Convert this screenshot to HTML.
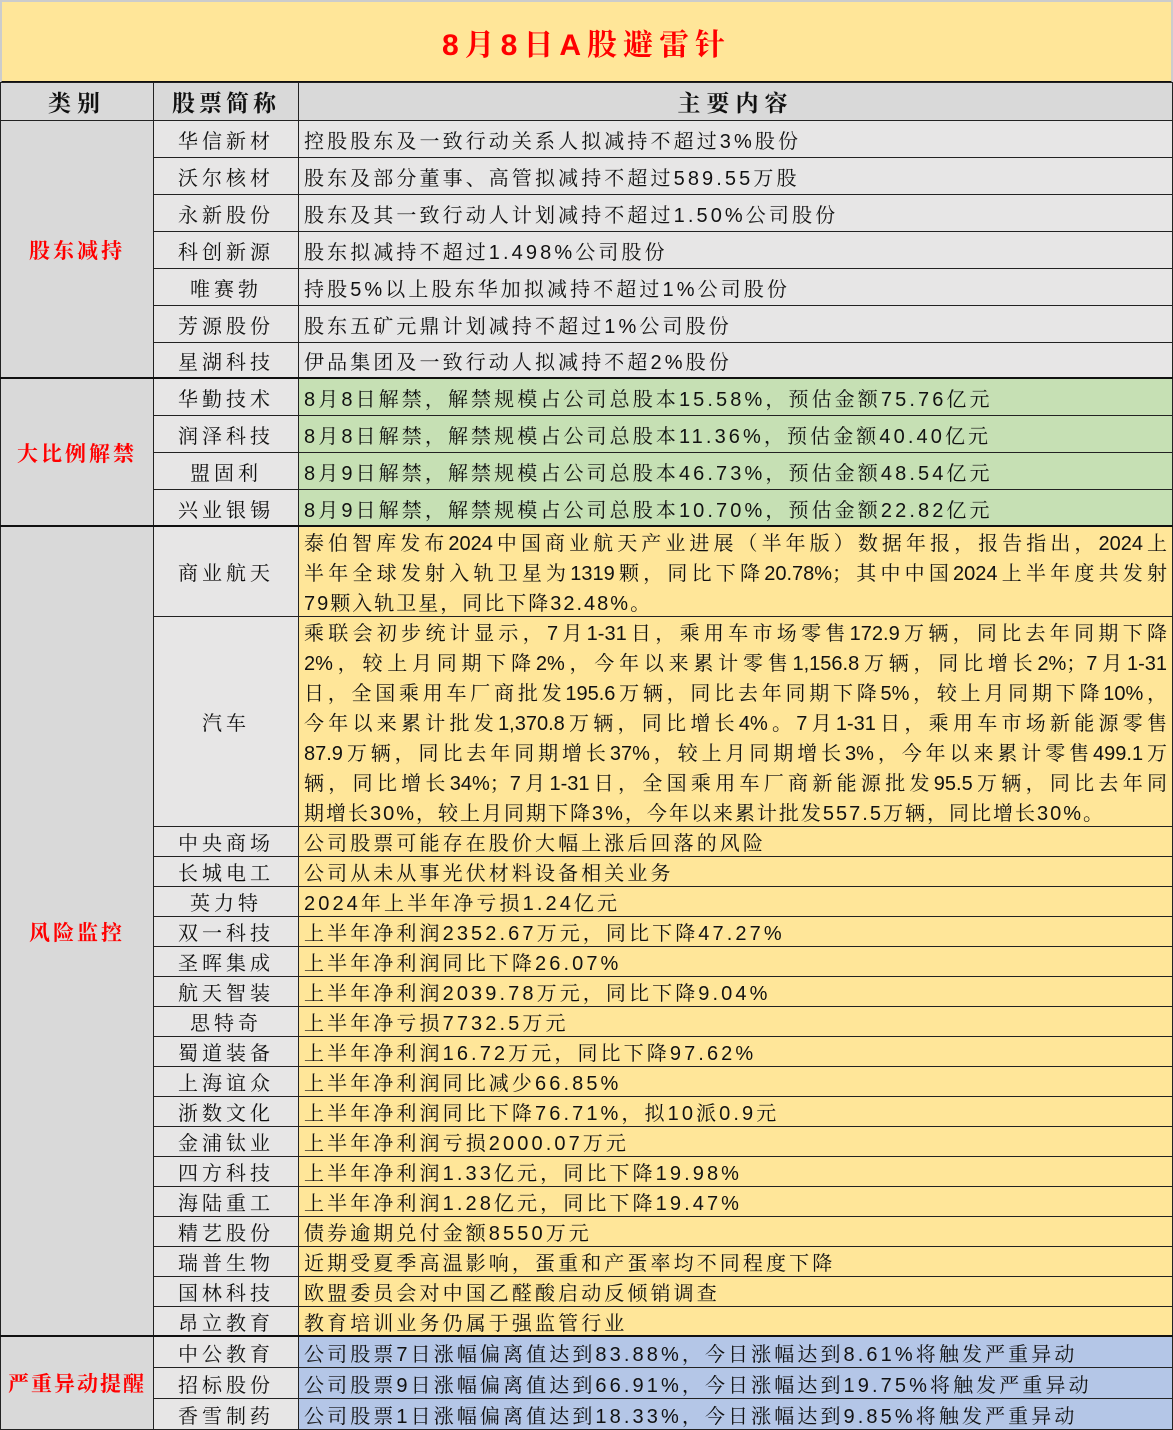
<!DOCTYPE html><html><head><meta charset="utf-8"><style>
body{margin:0;width:1173px;height:1430px;position:relative;overflow:hidden;background:#fff;font-family:"Liberation Sans","Noto Serif CJK SC",serif;}
.c{position:absolute;box-sizing:border-box;border:1px solid #222;display:flex;align-items:center;font-size:20px;color:#111;white-space:nowrap;overflow:hidden;font-family:"Liberation Sans","Noto Serif CJK SC",serif}
.n{justify-content:center;letter-spacing:4px;background:#E7E6E6;font-family:"Noto Serif CJK SC",serif}
.t{padding-left:5px;letter-spacing:3.1px}
.g{background:#E7E6E6}.gr{background:#C6E0B4}.y{background:#FFE699}.b{background:#B4C6E7}
.k{background:#D9D9D9;justify-content:center;color:#f00;font-weight:bold;font-size:21px;letter-spacing:3px}
.p{display:block;padding:2px 5px 0 5px;line-height:30px;white-space:normal}
.p div{text-align:justify;text-align-last:justify;white-space:nowrap;overflow:hidden}
.p div.l{text-align-last:left;letter-spacing:2px}
</style></head><body>
<div class="c" style="left:0;top:0;width:1173px;height:83px;background:#FFE699;justify-content:center;color:#f00;font-weight:bold;font-size:30px;letter-spacing:6px;border:2px solid #ccc;border-bottom:2px solid #111">8月8日A股避雷针</div>
<div class="c" style="left:0;top:82px;width:154px;height:39px;background:#D9D9D9;justify-content:center;font-weight:bold;font-size:23px;letter-spacing:6px">类别</div>
<div class="c" style="left:153px;top:82px;width:146px;height:39px;background:#D9D9D9;justify-content:center;font-weight:bold;font-size:23px;letter-spacing:4px">股票简称</div>
<div class="c" style="left:298px;top:82px;width:875px;height:39px;background:#D9D9D9;justify-content:center;font-weight:bold;font-size:23px;letter-spacing:6px">主要内容</div>

<div class="c k" style="left:0;top:120px;width:154px;height:259px">股东减持</div>
<div class="c k" style="left:0;top:378px;width:154px;height:149px">大比例解禁</div>
<div class="c k" style="left:0;top:526px;width:154px;height:811px">风险监控</div>
<div class="c k" style="left:0;top:1336px;width:154px;height:94px;letter-spacing:2px">严重异动提醒</div>

<div class="c n" style="left:153px;top:120px;width:146px;height:38px">华信新材</div><div class="c t g" style="left:298px;top:120px;width:875px;height:38px">控股股东及一致行动关系人拟减持不超过3%股份</div>
<div class="c n" style="left:153px;top:157px;width:146px;height:38px">沃尔核材</div><div class="c t g" style="left:298px;top:157px;width:875px;height:38px">股东及部分董事、高管拟减持不超过589.55万股</div>
<div class="c n" style="left:153px;top:194px;width:146px;height:38px">永新股份</div><div class="c t g" style="left:298px;top:194px;width:875px;height:38px">股东及其一致行动人计划减持不超过1.50%公司股份</div>
<div class="c n" style="left:153px;top:231px;width:146px;height:38px">科创新源</div><div class="c t g" style="left:298px;top:231px;width:875px;height:38px">股东拟减持不超过1.498%公司股份</div>
<div class="c n" style="left:153px;top:268px;width:146px;height:38px">唯赛勃</div><div class="c t g" style="left:298px;top:268px;width:875px;height:38px">持股5%以上股东华加拟减持不超过1%公司股份</div>
<div class="c n" style="left:153px;top:305px;width:146px;height:38px">芳源股份</div><div class="c t g" style="left:298px;top:305px;width:875px;height:38px">股东五矿元鼎计划减持不超过1%公司股份</div>
<div class="c n" style="left:153px;top:342px;width:146px;height:37px">星湖科技</div><div class="c t g" style="left:298px;top:342px;width:875px;height:37px">伊品集团及一致行动人拟减持不超2%股份</div>

<div class="c n" style="left:153px;top:378px;width:146px;height:38px">华勤技术</div><div class="c t gr" style="left:298px;top:378px;width:875px;height:38px">8月8日解禁，解禁规模占公司总股本15.58%，预估金额75.76亿元</div>
<div class="c n" style="left:153px;top:415px;width:146px;height:38px">润泽科技</div><div class="c t gr" style="left:298px;top:415px;width:875px;height:38px">8月8日解禁，解禁规模占公司总股本11.36%，预估金额40.40亿元</div>
<div class="c n" style="left:153px;top:452px;width:146px;height:38px">盟固利</div><div class="c t gr" style="left:298px;top:452px;width:875px;height:38px">8月9日解禁，解禁规模占公司总股本46.73%，预估金额48.54亿元</div>
<div class="c n" style="left:153px;top:489px;width:146px;height:38px">兴业银锡</div><div class="c t gr" style="left:298px;top:489px;width:875px;height:38px">8月9日解禁，解禁规模占公司总股本10.70%，预估金额22.82亿元</div>

<div class="c n" style="left:153px;top:526px;width:146px;height:91px">商业航天</div>
<div class="c t y p" style="left:298px;top:526px;width:875px;height:91px;letter-spacing:0"><div>泰伯智库发布2024中国商业航天产业进展（半年版）数据年报，报告指出，2024上</div><div>半年全球发射入轨卫星为1319颗，同比下降20.78%；其中中国2024上半年度共发射</div><div class="l">79颗入轨卫星，同比下降32.48%。</div></div>
<div class="c n" style="left:153px;top:616px;width:146px;height:211px">汽车</div>
<div class="c t y p" style="left:298px;top:616px;width:875px;height:211px;letter-spacing:0"><div>乘联会初步统计显示，7月1-31日，乘用车市场零售172.9万辆，同比去年同期下降</div><div>2%，较上月同期下降2%，今年以来累计零售1,156.8万辆，同比增长2%；7月1-31</div><div>日，全国乘用车厂商批发195.6万辆，同比去年同期下降5%，较上月同期下降10%，</div><div>今年以来累计批发1,370.8万辆，同比增长4%。7月1-31日，乘用车市场新能源零售</div><div>87.9万辆，同比去年同期增长37%，较上月同期增长3%，今年以来累计零售499.1万</div><div>辆，同比增长34%；7月1-31日，全国乘用车厂商新能源批发95.5万辆，同比去年同</div><div class="l">期增长30%，较上月同期下降3%，今年以来累计批发557.5万辆，同比增长30%。</div></div>

<div class="c n" style="left:153px;top:826px;width:146px;height:31px">中央商场</div><div class="c t y" style="left:298px;top:826px;width:875px;height:31px">公司股票可能存在股价大幅上涨后回落的风险</div>
<div class="c n" style="left:153px;top:856px;width:146px;height:31px">长城电工</div><div class="c t y" style="left:298px;top:856px;width:875px;height:31px">公司从未从事光伏材料设备相关业务</div>
<div class="c n" style="left:153px;top:886px;width:146px;height:31px">英力特</div><div class="c t y" style="left:298px;top:886px;width:875px;height:31px">2024年上半年净亏损1.24亿元</div>
<div class="c n" style="left:153px;top:916px;width:146px;height:31px">双一科技</div><div class="c t y" style="left:298px;top:916px;width:875px;height:31px">上半年净利润2352.67万元，同比下降47.27%</div>
<div class="c n" style="left:153px;top:946px;width:146px;height:31px">圣晖集成</div><div class="c t y" style="left:298px;top:946px;width:875px;height:31px">上半年净利润同比下降26.07%</div>
<div class="c n" style="left:153px;top:976px;width:146px;height:31px">航天智装</div><div class="c t y" style="left:298px;top:976px;width:875px;height:31px">上半年净利润2039.78万元，同比下降9.04%</div>
<div class="c n" style="left:153px;top:1006px;width:146px;height:31px">思特奇</div><div class="c t y" style="left:298px;top:1006px;width:875px;height:31px">上半年净亏损7732.5万元</div>
<div class="c n" style="left:153px;top:1036px;width:146px;height:31px">蜀道装备</div><div class="c t y" style="left:298px;top:1036px;width:875px;height:31px">上半年净利润16.72万元，同比下降97.62%</div>
<div class="c n" style="left:153px;top:1066px;width:146px;height:31px">上海谊众</div><div class="c t y" style="left:298px;top:1066px;width:875px;height:31px">上半年净利润同比减少66.85%</div>
<div class="c n" style="left:153px;top:1096px;width:146px;height:31px">浙数文化</div><div class="c t y" style="left:298px;top:1096px;width:875px;height:31px">上半年净利润同比下降76.71%，拟10派0.9元</div>
<div class="c n" style="left:153px;top:1126px;width:146px;height:31px">金浦钛业</div><div class="c t y" style="left:298px;top:1126px;width:875px;height:31px">上半年净利润亏损2000.07万元</div>
<div class="c n" style="left:153px;top:1156px;width:146px;height:31px">四方科技</div><div class="c t y" style="left:298px;top:1156px;width:875px;height:31px">上半年净利润1.33亿元，同比下降19.98%</div>
<div class="c n" style="left:153px;top:1186px;width:146px;height:31px">海陆重工</div><div class="c t y" style="left:298px;top:1186px;width:875px;height:31px">上半年净利润1.28亿元，同比下降19.47%</div>
<div class="c n" style="left:153px;top:1216px;width:146px;height:31px">精艺股份</div><div class="c t y" style="left:298px;top:1216px;width:875px;height:31px">债券逾期兑付金额8550万元</div>
<div class="c n" style="left:153px;top:1246px;width:146px;height:31px">瑞普生物</div><div class="c t y" style="left:298px;top:1246px;width:875px;height:31px">近期受夏季高温影响，蛋重和产蛋率均不同程度下降</div>
<div class="c n" style="left:153px;top:1276px;width:146px;height:31px">国林科技</div><div class="c t y" style="left:298px;top:1276px;width:875px;height:31px">欧盟委员会对中国乙醛酸启动反倾销调查</div>
<div class="c n" style="left:153px;top:1306px;width:146px;height:31px">昂立教育</div><div class="c t y" style="left:298px;top:1306px;width:875px;height:31px">教育培训业务仍属于强监管行业</div>

<div class="c n" style="left:153px;top:1336px;width:146px;height:32px">中公教育</div><div class="c t b" style="left:298px;top:1336px;width:875px;height:32px">公司股票7日涨幅偏离值达到83.88%，今日涨幅达到8.61%将触发严重异动</div>
<div class="c n" style="left:153px;top:1367px;width:146px;height:32px">招标股份</div><div class="c t b" style="left:298px;top:1367px;width:875px;height:32px">公司股票9日涨幅偏离值达到66.91%，今日涨幅达到19.75%将触发严重异动</div>
<div class="c n" style="left:153px;top:1398px;width:146px;height:32px">香雪制药</div><div class="c t b" style="left:298px;top:1398px;width:875px;height:32px">公司股票1日涨幅偏离值达到18.33%，今日涨幅达到9.85%将触发严重异动</div>

<div style="position:absolute;left:0;top:377px;width:1173px;height:2px;background:#111"></div>
<div style="position:absolute;left:0;top:525px;width:1173px;height:2px;background:#111"></div>
<div style="position:absolute;left:0;top:1335px;width:1173px;height:2px;background:#111"></div>
</body></html>
